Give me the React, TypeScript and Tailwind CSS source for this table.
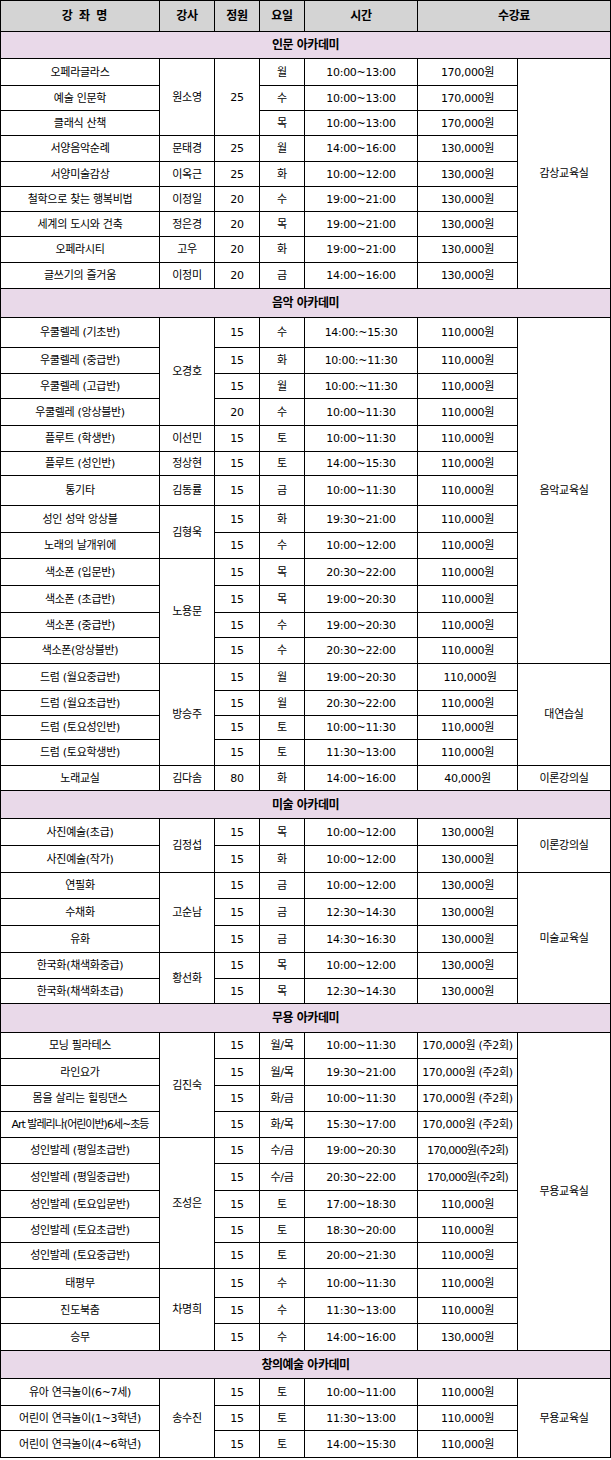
import { Fragment } from "react";

type Span = { text: string; span: number };
type Row = {
  h: string;
  name: string;
  day: string;
  time: string;
  fee: string;
  teacher?: Span;
  cap?: Span;
  room?: Span;
  nameCls?: string;
  feeCls?: string;
};
type Section = { title: string; h: string; rows: Row[] };

const t = (text: string, span = 1): Span => ({ text, span });
const R = (h: string, name: string, day: string, time: string, fee: string, x: Partial<Row> = {}): Row => ({
  h,
  name,
  day,
  time,
  fee,
  ...x,
});

const sections: Section[] = [
  {
    title: "인문 아카데미",
    h: "h-[27px]",
    rows: [
      R("h-[27px]", "오페라글라스", "월", "10:00~13:00", "170,000원", { teacher: t("원소영", 3), cap: t("25", 3), room: t("감상교육실", 9) }),
      R("h-[25px]", "예술 인문학", "수", "10:00~13:00", "170,000원"),
      R("h-[25px]", "클래식 산책", "목", "10:00~13:00", "170,000원"),
      R("h-[26px]", "서양음악순례", "월", "14:00~16:00", "130,000원", { teacher: t("문태경"), cap: t("25") }),
      R("h-[25px]", "서양미술감상", "화", "10:00~12:00", "130,000원", { teacher: t("이옥근"), cap: t("25") }),
      R("h-[25px]", "철학으로 찾는 행복비법", "수", "19:00~21:00", "130,000원", { teacher: t("이정일"), cap: t("20") }),
      R("h-[25px]", "세계의 도시와 건축", "목", "19:00~21:00", "130,000원", { teacher: t("정은경"), cap: t("20") }),
      R("h-[26px]", "오페라시티", "화", "19:00~21:00", "130,000원", { teacher: t("고우"), cap: t("20") }),
      R("h-[26px]", "글쓰기의 즐거움", "금", "14:00~16:00", "130,000원", { teacher: t("이정미"), cap: t("20") }),
    ],
  },
  {
    title: "음악 아카데미",
    h: "h-[29px]",
    rows: [
      R("h-[30px]", "우쿨렐레 (기초반)", "수", "14:00:~15:30", "110,000원", { teacher: t("오경호", 4), cap: t("15"), room: t("음악교육실", 13) }),
      R("h-[26px]", "우쿨렐레 (중급반)", "화", "10:00:~11:30", "110,000원", { cap: t("15") }),
      R("h-[25px]", "우쿨렐레 (고급반)", "월", "10:00:~11:30", "110,000원", { cap: t("15") }),
      R("h-[27px]", "우쿨렐레 (앙상블반)", "수", "10:00~11:30", "110,000원", { cap: t("20") }),
      R("h-[26px]", "플루트 (학생반)", "토", "10:00~11:30", "110,000원", { teacher: t("이선민"), cap: t("15") }),
      R("h-[24px]", "플루트 (성인반)", "토", "14:00~15:30", "110,000원", { teacher: t("정상현"), cap: t("15") }),
      R("h-[30px]", "통기타", "금", "10:00~11:30", "110,000원", { teacher: t("김동률"), cap: t("15") }),
      R("h-[27px]", "성인 성악 앙상블", "화", "19:30~21:00", "110,000원", { teacher: t("김형욱", 2), cap: t("15") }),
      R("h-[26px]", "노래의 날개위에", "수", "10:00~12:00", "110,000원", { cap: t("15") }),
      R("h-[27px]", "색소폰 (입문반)", "목", "20:30~22:00", "110,000원", { teacher: t("노용문", 4), cap: t("15") }),
      R("h-[27px]", "색소폰 (초급반)", "목", "19:00~20:30", "110,000원", { cap: t("15") }),
      R("h-[25px]", "색소폰 (중급반)", "수", "19:00~20:30", "110,000원", { cap: t("15") }),
      R("h-[26px]", "색소폰(앙상블반)", "수", "20:30~22:00", "110,000원", { cap: t("15") }),
      R("h-[27px]", "드럼 (월요중급반)", "월", "19:00~20:30", "110,000원", { teacher: t("방승주", 4), cap: t("15"), room: t("대연습실", 4), feeCls: "pl-[5px]" }),
      R("h-[25px]", "드럼 (월요초급반)", "월", "20:30~22:00", "110,000원", { cap: t("15") }),
      R("h-[24px]", "드럼 (토요성인반)", "토", "10:00~11:30", "110,000원", { cap: t("15") }),
      R("h-[26px]", "드럼 (토요학생반)", "토", "11:30~13:00", "110,000원", { cap: t("15") }),
      R("h-[25px]", "노래교실", "화", "14:00~16:00", "40,000원", { teacher: t("김다솜"), cap: t("80"), room: t("이론강의실") }),
    ],
  },
  {
    title: "미술 아카데미",
    h: "h-[28px]",
    rows: [
      R("h-[27px]", "사진예술(초급)", "목", "10:00~12:00", "130,000원", { teacher: t("김정섭", 2), cap: t("15"), room: t("이론강의실", 2) }),
      R("h-[27px]", "사진예술(작가)", "화", "10:00~12:00", "130,000원", { cap: t("15") }),
      R("h-[26px]", "연필화", "금", "10:00~12:00", "130,000원", { teacher: t("고순남", 3), cap: t("15"), room: t("미술교육실", 5) }),
      R("h-[27px]", "수채화", "금", "12:30~14:30", "130,000원", { cap: t("15") }),
      R("h-[27px]", "유화", "금", "14:30~16:30", "130,000원", { cap: t("15") }),
      R("h-[26px]", "한국화(채색화중급)", "목", "10:00~12:00", "130,000원", { teacher: t("황선화", 2), cap: t("15") }),
      R("h-[25px]", "한국화(채색화초급)", "목", "12:30~14:30", "130,000원", { cap: t("15") }),
    ],
  },
  {
    title: "무용 아카데미",
    h: "h-[29px]",
    rows: [
      R("h-[26px]", "모닝 필라테스", "월/목", "10:00~11:30", "170,000원 (주2회)", { teacher: t("김진숙", 4), cap: t("15"), room: t("무용교육실", 12) }),
      R("h-[27px]", "라인요가", "월/목", "19:30~21:00", "170,000원 (주2회)", { cap: t("15") }),
      R("h-[26px]", "몸을 살리는 힐링댄스", "화/금", "10:00~11:30", "170,000원 (주2회)", { cap: t("15") }),
      R("h-[26px]", "Art 발레리나(어린이반)6세~초등", "화/목", "15:30~17:00", "170,000원 (주2회)", { cap: t("15"), nameCls: "tracking-[-1px]" }),
      R("h-[26px]", "성인발레 (평일초급반)", "수/금", "19:00~20:30", "170,000원(주2회)", { teacher: t("조성은", 5), cap: t("15"), feeCls: "tracking-[-0.8px]" }),
      R("h-[27px]", "성인발레 (평일중급반)", "수/금", "20:30~22:00", "170,000원(주2회)", { cap: t("15"), feeCls: "tracking-[-0.8px]" }),
      R("h-[27px]", "성인발레 (토요입문반)", "토", "17:00~18:30", "110,000원", { cap: t("15") }),
      R("h-[25px]", "성인발레 (토요초급반)", "토", "18:30~20:00", "110,000원", { cap: t("15") }),
      R("h-[26px]", "성인발레 (토요중급반)", "토", "20:00~21:30", "110,000원", { cap: t("15") }),
      R("h-[29px]", "태평무", "수", "10:00~11:30", "110,000원", { teacher: t("차명희", 3), cap: t("15") }),
      R("h-[26px]", "진도북춤", "수", "11:30~13:00", "110,000원", { cap: t("15") }),
      R("h-[27px]", "승무", "수", "14:00~16:00", "130,000원", { cap: t("15") }),
    ],
  },
  {
    title: "창의예술 아카데미",
    h: "h-[28px]",
    rows: [
      R("h-[27px]", "유아 연극놀이(6~7세)", "토", "10:00~11:00", "110,000원", { teacher: t("송수진", 3), cap: t("15"), room: t("무용교육실", 3) }),
      R("h-[25px]", "어린이 연극놀이(1~3학년)", "토", "11:30~13:00", "110,000원", { cap: t("15") }),
      R("h-[27px]", "어린이 연극놀이(4~6학년)", "토", "14:00~15:30", "110,000원", { cap: t("15") }),
    ],
  },
];

const cell = "border border-black p-0 text-center align-middle whitespace-nowrap";
const head = "border border-black p-0 text-center align-middle whitespace-nowrap font-bold text-[12px]";

export default function App() {
  return (
    <div className="bg-white min-h-[1460px] font-['DejaVu_Sans','Noto_Sans_CJK_KR',sans-serif] text-[11px] leading-none tracking-[-0.3px] text-black">
      <table className="table-fixed border-collapse w-[610px]">
        <colgroup>
          <col className="w-[159px]" />
          <col className="w-[55px]" />
          <col className="w-[45px]" />
          <col className="w-[45px]" />
          <col className="w-[113px]" />
          <col className="w-[100px]" />
          <col className="w-[93px]" />
        </colgroup>
        <thead>
          <tr className="h-[31px] bg-[#d4d4d4]">
            <th className={`${head} pl-[10px] tracking-[1px]`}>강 좌 명</th>
            <th className={head}>강사</th>
            <th className={head}>정원</th>
            <th className={head}>요일</th>
            <th className={head}>시간</th>
            <th className={head} colSpan={2}>수강료</th>
          </tr>
        </thead>
        <tbody>
          {sections.map((s) => (
            <Fragment key={s.title}>
              <tr className={s.h}>
                <td colSpan={7} className={`${head} bg-[#e9d9e9] tracking-[-0.5px]`}>
                  {s.title}
                </td>
              </tr>
              {s.rows.map((r, i) => (
                <tr key={i} className={r.h}>
                  <td className={`${cell} ${r.nameCls ?? ""}`}>{r.name}</td>
                  {r.teacher && (
                    <td rowSpan={r.teacher.span} className={cell}>
                      {r.teacher.text}
                    </td>
                  )}
                  {r.cap && (
                    <td rowSpan={r.cap.span} className={cell}>
                      {r.cap.text}
                    </td>
                  )}
                  <td className={cell}>{r.day}</td>
                  <td className={cell}>{r.time}</td>
                  <td className={`${cell} ${r.feeCls ?? ""}`}>{r.fee}</td>
                  {r.room && (
                    <td rowSpan={r.room.span} className={cell}>
                      {r.room.text}
                    </td>
                  )}
                </tr>
              ))}
            </Fragment>
          ))}
        </tbody>
      </table>
    </div>
  );
}
